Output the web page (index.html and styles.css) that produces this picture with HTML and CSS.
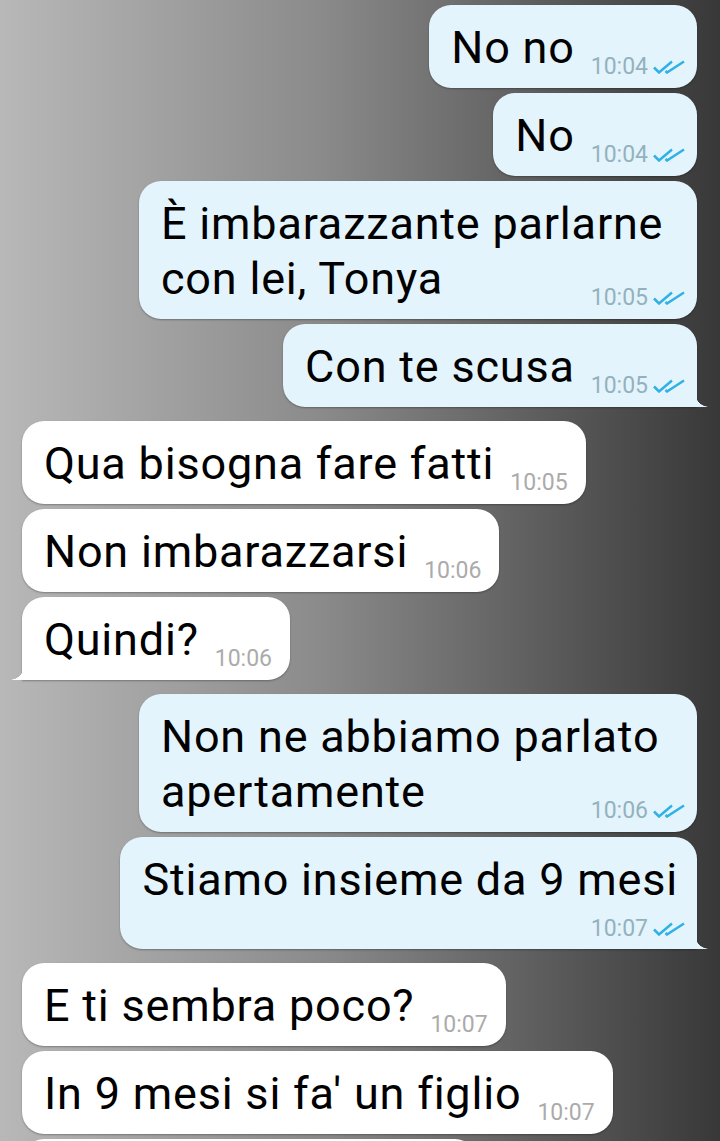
FILE: index.html
```html
<!DOCTYPE html>
<html lang="it">
<head>
    <meta charset="UTF-8">
    <meta name="viewport" content="width=device-width, initial-scale=1.0">
    <title>Chat</title>
    <link rel="stylesheet" href="styles.css">
</head>
<body>
    <div class="chat">
        <div class="group out">
            <div class="bubble">No no<span class="meta">10:04<svg class="ticks" viewBox="0 0 32 14"><path d="M1 7.5l5 5L19 1.5M12.5 11l1.5 1.5L31 1.5"/></svg></span></div>
            <div class="bubble">No<span class="meta">10:04<svg class="ticks" viewBox="0 0 32 14"><path d="M1 7.5l5 5L19 1.5M12.5 11l1.5 1.5L31 1.5"/></svg></span></div>
            <div class="bubble multi">È imbarazzante parlarne con lei, Tonya<span class="meta">10:05<svg class="ticks" viewBox="0 0 32 14"><path d="M1 7.5l5 5L19 1.5M12.5 11l1.5 1.5L31 1.5"/></svg></span></div>
            <div class="bubble tail">Con te scusa<span class="meta">10:05<svg class="ticks" viewBox="0 0 32 14"><path d="M1 7.5l5 5L19 1.5M12.5 11l1.5 1.5L31 1.5"/></svg></span></div>
        </div>

        <div class="group in">
            <div class="bubble">Qua bisogna fare fatti<span class="meta">10:05</span></div>
            <div class="bubble">Non imbarazzarsi<span class="meta">10:06</span></div>
            <div class="bubble tail">Quindi?<span class="meta">10:06</span></div>
        </div>

        <div class="group out">
            <div class="bubble multi">Non ne abbiamo parlato apertamente<span class="meta">10:06<svg class="ticks" viewBox="0 0 32 14"><path d="M1 7.5l5 5L19 1.5M12.5 11l1.5 1.5L31 1.5"/></svg></span></div>
            <div class="bubble stacked tail">Stiamo insieme da 9 mesi<span class="meta">10:07<svg class="ticks" viewBox="0 0 32 14"><path d="M1 7.5l5 5L19 1.5M12.5 11l1.5 1.5L31 1.5"/></svg></span></div>
        </div>

        <div class="group in">
            <div class="bubble">E ti sembra poco?<span class="meta">10:07</span></div>
            <div class="bubble">In 9 mesi si fa' un figlio<span class="meta">10:07</span></div>
            <div class="bubble cut">&nbsp;</div>
        </div>
    </div>
</body>
</html>
```

FILE: styles.css
```css
html, body {
    margin: 0;
    height: 1141px;
    overflow: hidden;
}
body {
    background: linear-gradient(90deg, #b8b8b8 0%, #8a8a8a 45%, #383838 100%);
    font-family: Roboto, "Noto Sans", sans-serif;
    color: #000;
}
.chat {
    display: flex;
    flex-direction: column;
    gap: 14px;
    padding: 5px 23px 0 22px;
}
.group {
    display: flex;
    flex-direction: column;
    gap: 5px;
}
.group.out {
    align-items: flex-end;
}
.group.in {
    align-items: flex-start;
}
.bubble {
    position: relative;
    max-width: 610px;
    padding: 15px 12px 13px 22px;
    border-radius: 22px;
    font-size: 45px;
    line-height: 55px;
    letter-spacing: 0.8px;
    box-shadow: 0 1px 2px rgba(0, 0, 0, 0.3);
    box-sizing: border-box;
}
.bubble.multi {
    max-width: 558px;
}
.out .bubble {
    background-color: #e4f4fc;
}
.in .bubble {
    background-color: #fff;
    padding-right: 18px;
}
.meta {
    float: right;
    margin: 35px 0 -4px 16px;
    font-size: 23px;
    line-height: 24px;
    letter-spacing: 0;
    white-space: nowrap;
}
.out .meta {
    color: #93b2bd;
}
.in .meta {
    color: #ababab;
}
.ticks {
    width: 32px;
    height: 14px;
    margin-left: 5px;
    vertical-align: 0;
    fill: none;
    stroke: #2fb1e6;
    stroke-width: 2.5;
}
.stacked {
    padding-right: 19px;
}
.stacked .meta {
    float: none;
    display: block;
    text-align: right;
    margin: 10px -7px -5px 0;
}
.cut {
    width: 455px;
}

/* bubble tails */
.out .tail {
    border-bottom-right-radius: 0;
}
.out .tail::after {
    content: "";
    position: absolute;
    right: -12px;
    bottom: 0;
    width: 12px;
    height: 14px;
    background: radial-gradient(circle at 100% 0, transparent 13.5px, #e4f4fc 14px);
}
.in .tail {
    border-bottom-left-radius: 0;
}
.in .tail::after {
    content: "";
    position: absolute;
    left: -12px;
    bottom: 0;
    width: 12px;
    height: 14px;
    background: radial-gradient(circle at 0 0, transparent 13.5px, #fff 14px);
}
```
